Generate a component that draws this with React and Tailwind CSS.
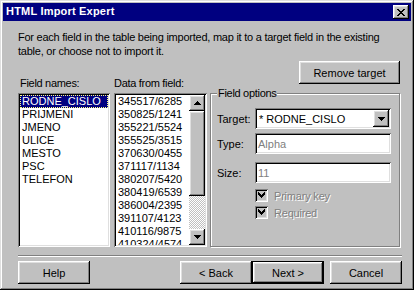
import React from 'react';

const raised =
  'shadow-[inset_-1px_-1px_#000,inset_1px_1px_#fff,inset_-2px_-2px_#808080,inset_2px_2px_#dfdfdf]';
const sunken =
  'shadow-[inset_1px_1px_#808080,inset_-1px_-1px_#fff,inset_2px_2px_#000,inset_-2px_-2px_#dfdfdf]';

const fieldNames = ['RODNE_CISLO', 'PRIJMENI', 'JMENO', 'ULICE', 'MESTO', 'PSC', 'TELEFON'];
const dataRows = [
  '345517/6285',
  '350825/1241',
  '355221/5524',
  '355525/3515',
  '370630/0455',
  '371117/1134',
  '380207/5420',
  '380419/6539',
  '386004/2395',
  '391107/4123',
  '410116/9875',
  '410324/4574',
];

const Arrow = ({ down }) => (
  <svg width="7" height="4" viewBox="0 0 7 4" shapeRendering="crispEdges">
    {down ? (
      <path d="M0 0h7v1H0zM1 1h5v1H1zM2 2h3v1H2zM3 3h1v1H3z" fill="#000" />
    ) : (
      <path d="M3 0h1v1H3zM2 1h3v1H2zM1 2h5v1H1zM0 3h7v1H0z" fill="#000" />
    )}
  </svg>
);

const Check = () => (
  <svg width="7" height="7" viewBox="0 0 7 7" shapeRendering="crispEdges">
    <path d="M6 0h1v3H6zM5 1h1v3H5zM4 2h1v3H4zM3 3h1v3H3zM2 2h1v3H2zM1 1h1v3H1zM0 0h1v3H0z" fill="#000" />
  </svg>
);

const Button = ({ children, className = '', isDefault }) => (
  <div
    className={`h-[23px] flex items-center justify-center bg-[#c0c0c0] ${
      isDefault ? 'border border-black' : ''
    } ${className}`}
  >
    <div className={`w-full h-full flex items-center justify-center ${raised}`}>{children}</div>
  </div>
);

const Checkbox = ({ label }) => (
  <div className="flex items-center h-[13px]">
    <div className={`w-[13px] h-[13px] bg-[#c0c0c0] flex items-center justify-center ${sunken}`}>
      <Check />
    </div>
    <span className="ml-[6px] text-[#808080] [text-shadow:1px_1px_#fff] tracking-[-0.2px]">{label}</span>
  </div>
);

export default function App() {
  return (
    <div
      className={`w-[414px] h-[290px] bg-[#c0c0c0] p-[3px] flex flex-col text-[11px] leading-[14px] text-black font-['Liberation_Sans',Arial,sans-serif] shadow-[inset_-1px_-1px_#000,inset_1px_1px_#dfdfdf,inset_-2px_-2px_#808080,inset_2px_2px_#fff]`}
    >
      {/* title bar */}
      <div className="h-[18px] bg-[#000080] flex items-start justify-between pl-[3px] pr-[2px]">
        <span className="mt-[1px] font-bold text-white tracking-[0.2px]">HTML Import Expert</span>
        <div className={`mt-[2px] w-[16px] h-[14px] bg-[#c0c0c0] flex items-center justify-center ${raised}`}>
          <svg width="8" height="7" viewBox="0 0 8 7" shapeRendering="crispEdges">
            <path
              d="M0 0h2v1H0zM6 0h2v1H6zM1 1h2v1H1zM5 1h2v1H5zM2 2h4v1H2zM3 3h2v1H3zM2 4h4v1H2zM1 5h2v1H1zM5 5h2v1H5zM0 6h2v1H0zM6 6h2v1H6z"
              fill="#000"
            />
          </svg>
        </div>
      </div>

      {/* body */}
      <div className="flex-1 flex flex-col pl-[15px] pr-[9px]">
        <p className="mt-[9px] whitespace-nowrap tracking-[-0.24px]">
          For each field in the table being imported, map it to a target field in the existing
          <br />
          table, or choose not to import it.
        </p>

        <div className="mt-[3px] flex">
          {/* field names */}
          <div className="w-[92px] flex flex-col">
            <span className="mt-[15px] pl-[2px] tracking-[-0.3px]">Field names:</span>
            <div className={`mt-[3px] h-[154px] bg-white p-[2px] leading-[13px] ${sunken}`}>
              {fieldNames.map((n, i) => (
                <div
                  key={n}
                  className={`h-[13px] pl-[2px] ${
                    i === 0
                      ? 'bg-[#000080] text-white outline outline-1 outline-dotted outline-[#ffff80] -outline-offset-1'
                      : ''
                  }`}
                >
                  {n}
                </div>
              ))}
            </div>
          </div>

          {/* data from field */}
          <div className="ml-[4px] w-[93px] flex flex-col">
            <span className="mt-[15px] tracking-[-0.3px]">Data from field:</span>
            <div className={`mt-[3px] h-[154px] bg-white p-[2px] flex ${sunken}`}>
              <div className="flex-1 overflow-hidden leading-[13px] pl-[2px]">
                {dataRows.map((d) => (
                  <div key={d} className="h-[13px]">
                    {d}
                  </div>
                ))}
              </div>
              <div className="w-[16px] flex flex-col">
                <div className={`h-[16px] bg-[#c0c0c0] flex items-center justify-center ${raised}`}>
                  <Arrow />
                </div>
                <div className={`h-[85px] bg-[#c0c0c0] ${raised}`} />
                <div className="flex-1 bg-[repeating-conic-gradient(#fff_0_25%,#c0c0c0_0_50%)] bg-[length:2px_2px]" />
                <div className={`h-[16px] bg-[#c0c0c0] flex items-center justify-center ${raised}`}>
                  <Arrow down />
                </div>
              </div>
            </div>
          </div>

          {/* right column */}
          <div className="ml-[3px] w-[190px] flex flex-col">
            <Button className="self-end w-[101px]">Remove target</Button>
            <div className="relative mt-[9px] h-[154px] border border-[#808080] shadow-[inset_1px_1px_#fff,1px_1px_#fff]">
              <span className="absolute left-[6px] top-[-8px] bg-[#c0c0c0] px-[1px] tracking-[-0.3px]">
                Field options
              </span>
              <div className="pl-[6px] pt-[14px] flex flex-col">
                <div className="flex items-center">
                  <span className="w-[38px]">Target:</span>
                  <div className={`w-[136px] h-[21px] bg-white p-[2px] flex items-center ${sunken}`}>
                    <span className="flex-1 pl-[2px]">* RODNE_CISLO</span>
                    <div className={`w-[16px] h-[17px] bg-[#c0c0c0] flex items-center justify-center ${raised}`}>
                      <Arrow down />
                    </div>
                  </div>
                </div>
                <div className="mt-[4px] flex items-center">
                  <span className="w-[38px]">Type:</span>
                  <div className={`w-[136px] h-[21px] bg-white px-[3px] flex items-center text-[#808080] ${sunken}`}>
                    Alpha
                  </div>
                </div>
                <div className="mt-[8px] flex items-center">
                  <span className="w-[38px]">Size:</span>
                  <div className={`w-[136px] h-[21px] bg-white px-[3px] flex items-center text-[#808080] ${sunken}`}>
                    11
                  </div>
                </div>
                <div className="ml-[38px] mt-[6px] flex flex-col gap-[4px]">
                  <Checkbox label="Primary key" />
                  <Checkbox label="Required" />
                </div>
              </div>
            </div>
          </div>
        </div>

        {/* separator */}
        <div className="mt-[8px] h-[2px] border-t border-[#808080] border-b border-b-white" />

        {/* bottom buttons */}
        <div className="mt-[4px] flex">
          <Button className="w-[72px]">Help</Button>
          <Button className="ml-[90px] w-[72px]">&lt; Back</Button>
          <Button className="w-[72px]" isDefault>
            Next &gt;
          </Button>
          <Button className="ml-[6px] w-[72px]">Cancel</Button>
        </div>
      </div>
    </div>
  );
}
